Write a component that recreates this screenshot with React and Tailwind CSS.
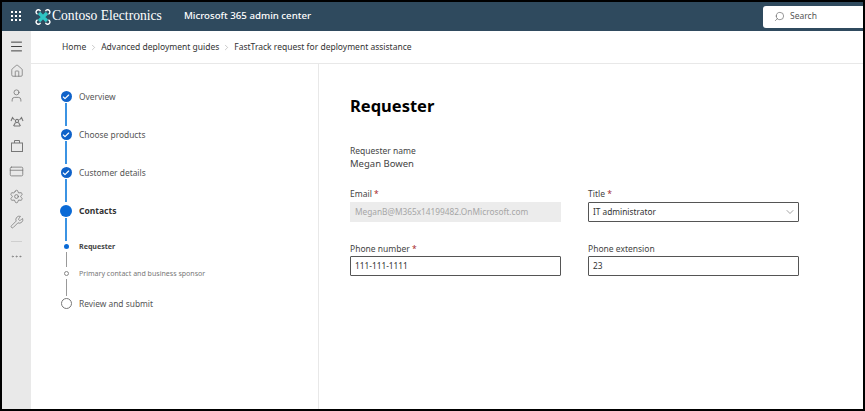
import { Check, ChevronDown, ChevronRight, CreditCard, Ellipsis, Home, Menu, Search, Settings, User, Wrench } from 'lucide-react';

const AppGrid = () => (
  <svg width="11" height="11" viewBox="0 0 11 11" fill="#fff">
    {[1, 5, 9].map((y) => [1, 5, 9].map((x) => <rect key={`${x}-${y}`} x={x - 1} y={y - 1} width="2" height="2" />))}
  </svg>
);

const Logo = () => (
  <svg width="16" height="18" viewBox="0 0 16 18" fill="none">
    <path d="M4 5 L12 13 M12 5 L4 13" stroke="#2fc4c4" strokeWidth="3.4" />
    <path d="M5.5 3.2 A2.3 2.3 0 1 0 2.6 6.2 M10.5 3.2 A2.3 2.3 0 1 1 13.4 6.2 M5.5 14.8 A2.3 2.3 0 1 1 2.6 11.8 M10.5 14.8 A2.3 2.3 0 1 0 13.4 11.8" stroke="#fff" strokeWidth="1.4" />
  </svg>
);

const PartnerIcon = () => (
  <svg width="14" height="14" viewBox="0 0 14 14" fill="none" stroke="#777" strokeWidth="1.1">
    <circle cx="7" cy="7" r="1.6" />
    <path d="M1 7 L2.5 3.5 L4.5 6 M13 7 L11.5 3.5 L9.5 6 M3.5 12 L5.5 8.5 M10.5 12 L8.5 8.5 M4 12 H10" />
  </svg>
);

const BagIcon = () => (
  <svg width="14" height="14" viewBox="0 0 14 14" fill="none" stroke="#777" strokeWidth="1">
    <rect x="1.5" y="4" width="11" height="8.5" />
    <path d="M4.5 4 V1.5 H9.5 V4" />
  </svg>
);

const navIcons = [
  <Home size={14} strokeWidth={1.3} />,
  <User size={15} strokeWidth={1.3} />,
  <PartnerIcon />,
  <BagIcon />,
  <CreditCard size={15} strokeWidth={1.3} />,
  <Settings size={15} strokeWidth={1.3} />,
  <Wrench size={14} strokeWidth={1.3} />,
];

const Sidebar = () => (
  <div className="w-[29px] shrink-0 bg-[#e9e9e9] flex flex-col items-center text-[#777] pt-[8px]">
    <Menu size={15} strokeWidth={1.6} className="text-[#444]" />
    <div className="mt-[4px] flex flex-col items-center">
      {navIcons.map((icon, i) => (
        <div key={i} className="h-[25.2px] flex items-center justify-center">{icon}</div>
      ))}
    </div>
    <div className="w-[11px] h-px bg-[#cfcfcf] mt-[7px]" />
    <Ellipsis size={13} strokeWidth={1.3} className="mt-[8px]" />
  </div>
);

const DoneDot = () => (
  <div className="w-[11px] h-[11px] rounded-full bg-[#0f62c9] flex items-center justify-center shrink-0">
    <Check size={8} strokeWidth={3.5} className="text-white" />
  </div>
);

const Step = ({ label }) => (
  <div className="h-[38px] flex gap-[7px]">
    <div className="w-[12px] flex flex-col items-center">
      <DoneDot />
      <div className="w-[2px] h-[23px] mt-px bg-[#3b93e3]" />
    </div>
    <span className="text-[8.4px] leading-[11px] text-[#555]">{label}</span>
  </div>
);

const Stepper = () => (
  <div className="pl-[29px] pt-[27px] flex flex-col">
    <Step label="Overview" />
    <Step label="Choose products" />
    <Step label="Customer details" />

    <div className="h-[36px] flex gap-[7px]">
      <div className="w-[12px] flex flex-col items-center">
        <div className="w-[12px] h-[12px] rounded-full bg-[#0a6ad6] shrink-0" />
        <div className="w-[2px] h-[23px] mt-px bg-[#3b93e3]" />
      </div>
      <span className="text-[8.5px] leading-[12px] font-bold text-[#333]">Contacts</span>
    </div>

    <div className="h-[27px] flex gap-[7px]">
      <div className="w-[12px] flex flex-col items-center">
        <div className="w-[5px] h-[5px] rounded-full bg-[#0a6ad6] mt-[3px] shrink-0" />
        <div className="w-px h-[15px] mt-[3px] bg-[#999]" />
      </div>
      <span className="text-[7.1px] leading-[11px] font-bold text-[#444]">Requester</span>
    </div>

    <div className="h-[29px] flex gap-[7px]">
      <div className="w-[12px] flex flex-col items-center">
        <div className="w-[5px] h-[5px] rounded-full border border-[#888] mt-[3px] shrink-0" />
        <div className="w-px h-[17px] mt-[3px] bg-[#999]" />
      </div>
      <span className="text-[7.05px] leading-[11px] text-[#777]">Primary contact and business sponsor</span>
    </div>

    <div className="flex gap-[7px] mt-[1px]">
      <div className="w-[11px] h-[11px] rounded-full border border-[#777] ml-px" />
      <span className="text-[8.4px] leading-[11px] text-[#555]">Review and submit</span>
    </div>
  </div>
);

const Label = ({ text, required }) => (
  <div className="text-[8.5px] leading-[12px] text-[#444]">
    {text}
    {required && <span className="text-[#a4262c]"> *</span>}
  </div>
);

const Field = ({ label, required, value, chevron, top = 'mt-px' }) => (
  <div>
    <Label text={label} required={required} />
    <div className={`${top} h-[20px] border border-[#555] rounded-[1px] flex items-center justify-between pl-[4px] pr-[2px] text-[8.3px] text-[#333]`}>
      <span>{value}</span>
      {chevron && <ChevronDown size={12} strokeWidth={1.2} className="text-[#666]" />}
    </div>
  </div>
);

export default function App() {
  return (
    <div className="w-[865px] h-[411px] border-2 border-black bg-white flex flex-col overflow-hidden" style={{ fontFamily: '"Noto Sans", sans-serif' }}>
      <header className="h-[29px] shrink-0 bg-[#2f4a5e] flex items-center text-white">
        <div className="w-[29px] flex justify-center"><AppGrid /></div>
        <div className="ml-[4px]"><Logo /></div>
        <span className="text-[13.6px] ml-[1px]" style={{ fontFamily: '"Liberation Serif", serif' }}>Contoso Electronics</span>
        <span className="text-[9.7px] font-medium ml-[22px]">Microsoft 365 admin center</span>
        <div className="ml-auto w-[100px] h-[22px] bg-white rounded-l-[3px] flex items-center gap-[5px] pl-[11px] text-[#555]">
          <Search size={11} strokeWidth={1.3} className="-scale-x-100" />
          <span className="text-[8.5px]">Search</span>
        </div>
      </header>

      <div className="flex-1 flex min-h-0">
        <Sidebar />
        <div className="flex-1 flex flex-col min-w-0">
          <nav className="h-[33px] shrink-0 border-b border-[#e8e8e8] flex items-center pl-[31px] text-[8.5px] text-[#333]">
            <span>Home</span>
            <ChevronRight size={9} strokeWidth={1} className="mx-[3px] text-[#777]" />
            <span>Advanced deployment guides</span>
            <ChevronRight size={9} strokeWidth={1} className="mx-[3px] text-[#777]" />
            <span>FastTrack request for deployment assistance</span>
          </nav>
          <div className="flex-1 flex min-h-0">
            <aside className="w-[288px] shrink-0 border-r border-[#e8e8e8]">
              <Stepper />
            </aside>
            <main className="flex-1 pl-[31px] pt-[30px]">
              <h1 className="text-[16.5px] leading-[24px] font-bold text-black">Requester</h1>
              <div className="mt-[27px]">
                <Label text="Requester name" />
                <div className="text-[9.5px] leading-[13px] text-[#444]">Megan Bowen</div>
              </div>
              <div className="mt-[18px] grid grid-cols-[211px_211px] gap-x-[27px] gap-y-[21px]">
                <div>
                  <Label text="Email" required />
                  <div className="mt-[2px] h-[20px] bg-[#ececec] flex items-center pl-[5px] text-[8.3px] text-[#a6a6a6]">MeganB@M365x14199482.OnMicrosoft.com</div>
                </div>
                <Field label="Title" required value="IT administrator" chevron top="mt-[2px]" />
                <Field label="Phone number" required value="111-111-1111" />
                <Field label="Phone extension" value="23" />
              </div>
            </main>
          </div>
        </div>
      </div>
    </div>
  );
}
